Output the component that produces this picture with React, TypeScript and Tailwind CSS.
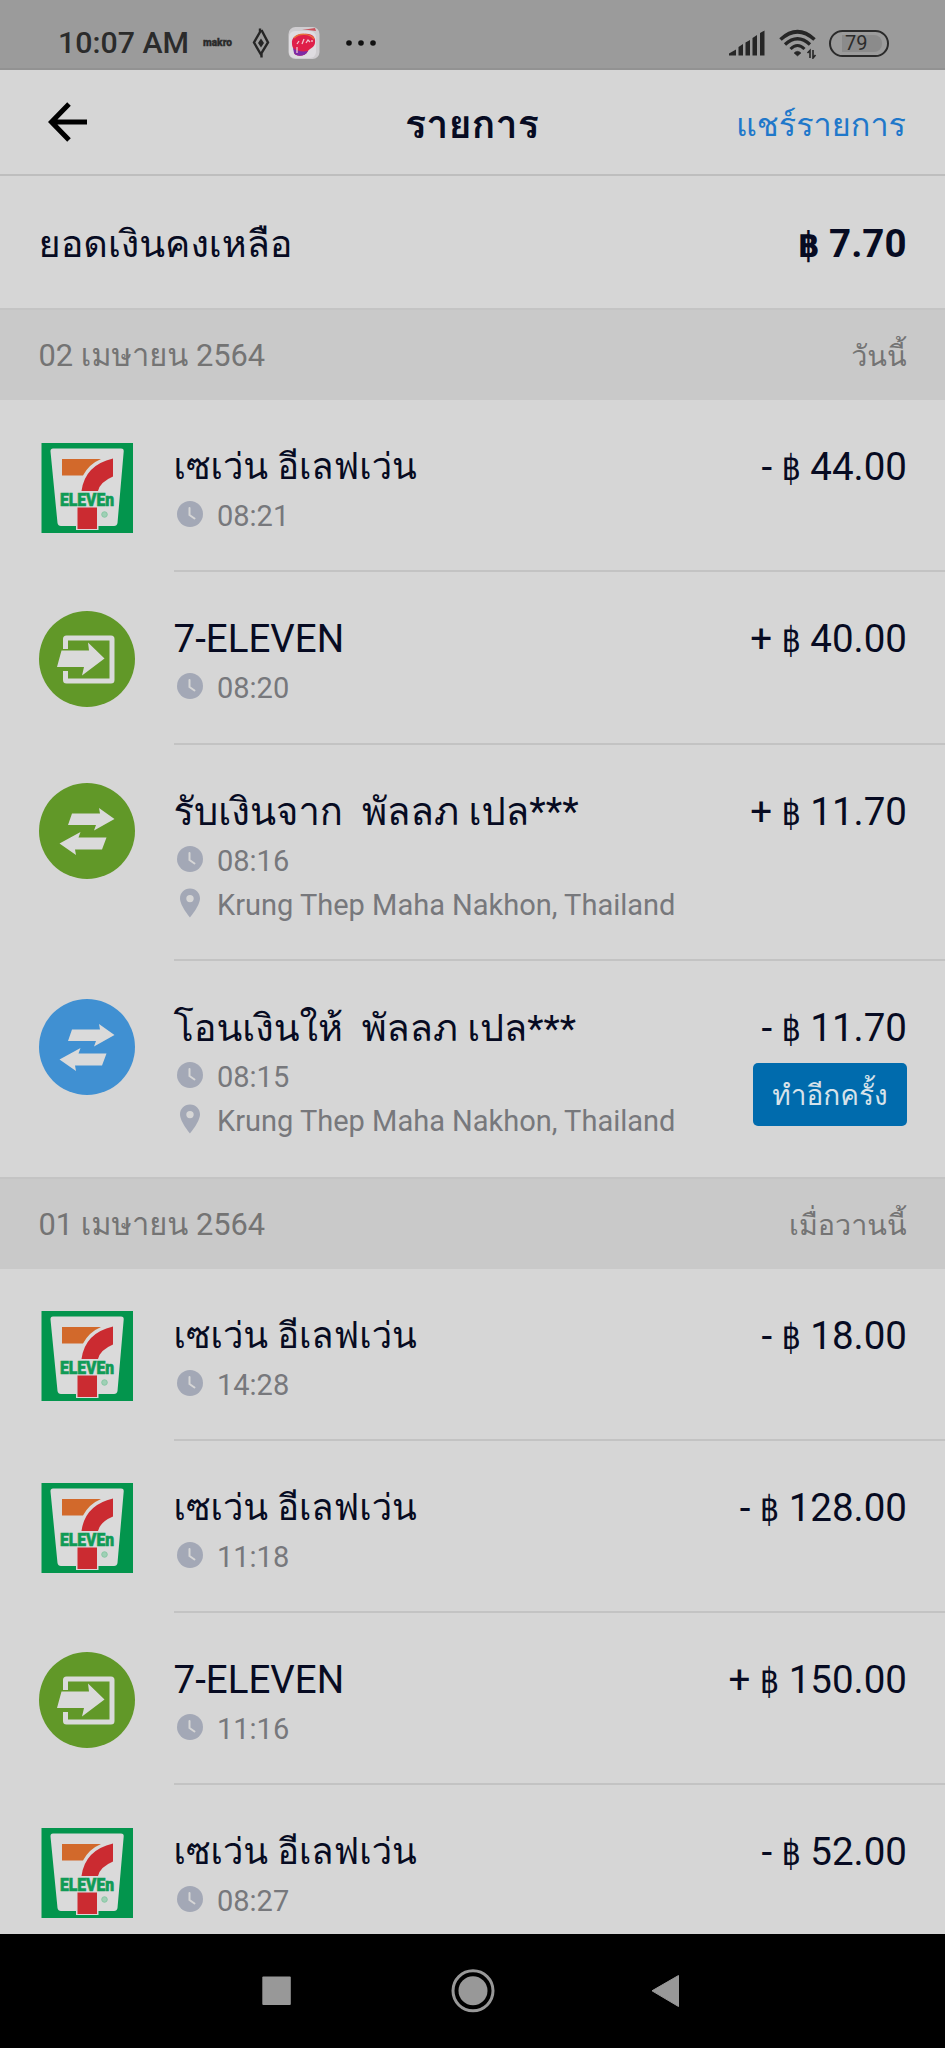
import type { ReactNode } from "react";

type IconKind = "seven" | "topup" | "received" | "sent";

type Transaction = {
  icon: IconKind;
  title: string;
  time: string;
  sign: string;
  amount: string;
  place?: string;
  again?: boolean;
};

const today: Transaction[] = [
  { icon: "seven", title: "เซเว่น อีเลฟเว่น", time: "08:21", sign: "-", amount: "44.00" },
  { icon: "topup", title: "7-ELEVEN", time: "08:20", sign: "+", amount: "40.00" },
  {
    icon: "received",
    title: "รับเงินจาก  พัลลภ เปล***",
    time: "08:16",
    sign: "+",
    amount: "11.70",
    place: "Krung Thep Maha Nakhon, Thailand",
  },
  {
    icon: "sent",
    title: "โอนเงินให้  พัลลภ เปล***",
    time: "08:15",
    sign: "-",
    amount: "11.70",
    place: "Krung Thep Maha Nakhon, Thailand",
    again: true,
  },
];

const yesterday: Transaction[] = [
  { icon: "seven", title: "เซเว่น อีเลฟเว่น", time: "14:28", sign: "-", amount: "18.00" },
  { icon: "seven", title: "เซเว่น อีเลฟเว่น", time: "11:18", sign: "-", amount: "128.00" },
  { icon: "topup", title: "7-ELEVEN", time: "11:16", sign: "+", amount: "150.00" },
  { icon: "seven", title: "เซเว่น อีเลฟเว่น", time: "08:27", sign: "-", amount: "52.00" },
];

const titleSize: Record<IconKind, string> = {
  seven: "text-[36.3px]",
  topup: "text-[38.5px]",
  received: "text-[38.2px]",
  sent: "text-[37.8px]",
};

const SevenLogo = () => (
  <svg viewBox="0 0 96 96" className="w-24 h-24">
    <rect x="2.5" y="4" width="91.5" height="90" fill="#03954d" />
    <path d="M14 9.5H82Q85 9.5 84.7 12.5L78.5 84Q78 87 75 87H22Q19 87 18.5 84L11.5 12.5Q11.3 9.5 14 9.5Z" fill="#dadada" />
    <path d="M23 20H62Q50 25 44 36.5H23Z" fill="#d2692b" />
    <path d="M74 19.5V37.5Q61 43 59 52H42.5Q46 26 74 19.5Z" fill="#cb2b31" />
    <rect x="37" y="67" width="22.5" height="24" fill="#dadada" />
    <rect x="38.5" y="68.5" width="19.5" height="21.5" fill="#cb2b31" />
    <text x="21" y="66.5" textLength="54" lengthAdjust="spacingAndGlyphs" fontFamily="Roboto" fontWeight="900" fontSize="18" fill="#109b56" stroke="#109b56" strokeWidth="0.6">
      ELEVEn
    </text>
    <circle cx="65.5" cy="75.5" r="2.8" fill="#9fd0b5" stroke="#7dc39d" strokeWidth="0.8" />
  </svg>
);

const Circle = ({ color, children }: { color: string; children: ReactNode }) => (
  <svg viewBox="0 0 96 96" className="w-24 h-24">
    <circle cx="48" cy="48" r="48" fill={color} />
    {children}
  </svg>
);

const TopUpArrow = () => (
  <>
    <path d="M26.5 38V28Q26.5 27 27.5 27H72Q73 27 73 28V69Q73 70 72 70H27.5Q26.5 70 26.5 69V60" fill="none" stroke="#dadada" strokeWidth="5" />
    <path d="M22.5 39.5H50L49 31.5L65.5 47.5L43 64.5L45 56H18Z" fill="#dadada" />
  </>
);

const TransferArrows = () => (
  <path
    d="M33 30.5H61L60 25L75.5 36L55 47.5L57 42H29ZM67.5 54.5L63 66.5H36L37 72L20.5 60.5L41.5 49L39.5 54.5Z"
    fill="#dadada"
  />
);

const TxIcon = ({ kind }: { kind: IconKind }) => {
  if (kind === "seven") return <SevenLogo />;
  if (kind === "topup") return <Circle color="#619828"><TopUpArrow /></Circle>;
  return (
    <Circle color={kind === "sent" ? "#4090d2" : "#619828"}>
      <TransferArrows />
    </Circle>
  );
};

const ClockIcon = () => (
  <svg viewBox="0 0 26 26" className="w-[26px] h-[26px]">
    <circle cx="13" cy="13" r="13" fill="#a3a8b6" />
    <path d="M12.5 7V14L17.5 17.5" fill="none" stroke="#d6d6d6" strokeWidth="2" strokeLinecap="round" />
  </svg>
);

const PinIcon = () => (
  <svg viewBox="0 0 26 30" className="w-[26px] h-[30px]">
    <path
      d="M13 0.5C7 0.5 3 5 3 10.5C3 17.5 13 29.5 13 29.5S23 17.5 23 10.5C23 5 19 0.5 13 0.5ZM13 14.3A3.7 3.7 0 1 1 13 6.9A3.7 3.7 0 1 1 13 14.3Z"
      fill="#a3a8b6"
    />
  </svg>
);

// tall, narrow baht sign that keeps the baseline of the digits
const Baht = () => (
  <span className="inline-block font-['DejaVu_Sans'] text-[30px] leading-none origin-[50%_85%] scale-y-[1.18]">฿</span>
);

const StatusBar = () => (
  <div className="h-[70px] shrink-0 bg-[#9b9b9b] border-b-2 border-[#929292] pl-[58px] pr-14 flex justify-between">
    <div className="flex items-center h-[86px]">
      <span className="w-[131px] text-[30.3px] font-medium text-[#2b2b2b] whitespace-nowrap">10:07 AM</span>
      <svg viewBox="0 0 30 12" className="ml-3.5 w-[30px] h-3 overflow-visible">
        <text x="0" y="9" textLength="29" lengthAdjust="spacingAndGlyphs" fontFamily="Roboto" fontWeight="900" fontSize="11" fill="#2b2b2b" stroke="#2b2b2b" strokeWidth="0.4">
          makro
        </text>
      </svg>
      <svg viewBox="0 0 18 30" className="ml-[19px] w-[18px] h-[30px]" fill="none" stroke="#262626" strokeWidth="2.4">
        <path d="M8 0.5V4L2 14.5L9.5 27.5M9.5 2L16 14.5L9.5 25V29.5" />
        <path d="M9 10.5L12 15L9 19.5L6 15Z" fill="#262626" strokeWidth="0" />
      </svg>
      <svg viewBox="0 0 32 34" className="ml-[18px] w-8 h-[34px]">
        <rect x="0.5" y="1" width="31" height="32" rx="7" fill="#cfcdd0" />
        <rect x="1" y="5" width="27" height="27" rx="6" fill="#dedce0" />
        <path d="M14 4L27 2L28 5L20 4Z" fill="#c9525c" />
        <path d="M4 18C3 11 9 8 16 8C24 7 28 11 27 17C26 22 22 22 20 25C17 31 8 31 6 27C7 23 4 22 4 18Z" fill="#df1f49" />
        <path d="M5 22C9 25 14 26 20 25C17 31 8 31 6 27Z" fill="#7c2ba6" />
        <path d="M6 12C11 7 22 7 26 13" fill="none" stroke="#e8713b" strokeWidth="1.5" />
        <path d="M9 27V21M9 18L11 15M14 18L16 13M18 17L20 14L22 16M24 16V14" fill="none" stroke="#f1c4cf" strokeWidth="1.3" />
      </svg>
      <svg viewBox="0 0 32 8" className="ml-[25px] w-8 h-2" fill="#111">
        <circle cx="4" cy="4" r="2.8" />
        <circle cx="16" cy="4" r="2.8" />
        <circle cx="28" cy="4" r="2.8" />
      </svg>
    </div>
    <div className="flex items-center h-[86px]">
      <svg viewBox="0 0 36 26" className="w-9 h-[26px]" fill="#262626">
        <path d="M0 25.5V23.5L7 19.5V25.5ZM9.5 25.5V17L14 14V25.5ZM16.5 25.5V12.5L21 10V25.5ZM23.5 25.5V8L28 5V25.5ZM31 25.5V3L35.5 0.5V25.5Z" />
      </svg>
      <svg viewBox="0 0 38 30" className="ml-3.5 w-[38px] h-[30px] mt-0.5" fill="none" stroke="#262626" strokeWidth="3">
        <path d="M1.5 10.5Q18.5 -5 35.5 10.5" strokeWidth="3.6" />
        <path d="M6 15.5Q18.5 4 31 15.5" strokeWidth="3.3" />
        <path d="M11.5 20Q18.5 13 25.5 20" />
        <path d="M18.5 27L15 24Q18.5 20.5 22 24Z" fill="#262626" strokeWidth="0.5" />
        <path d="M31 29V21.5L28.5 24M34 21V29L36.5 26" strokeWidth="1.6" />
      </svg>
      <div className="ml-3 w-[60px] h-[27px] rounded-full border-2 border-[#2b2b2b] pl-[11px] pr-1 flex items-center">
        <div className="w-10 h-[17px] rounded-r-lg bg-[#8b8b8b] pl-[3px] flex items-center text-[20px] leading-none text-[#2b2b2b]">79</div>
      </div>
    </div>
  </div>
);

const SectionHeader = ({ date, label }: { date: string; label: string }) => (
  <div className="h-[92px] shrink-0 bg-[#c9c9c9] border-t-2 border-[#c4c4c4] px-[38.5px] pt-0.5 flex items-center justify-between text-[30.8px] leading-[44px] text-[#747474]">
    <span>{date}</span>
    <span className="text-[28.7px]">{label}</span>
  </div>
);

const Row = ({ tx, last }: { tx: Transaction; last: boolean }) => (
  <div className={`${tx.place ? "h-[216px]" : "h-[172.3px]"} shrink-0 flex pl-[38.5px]`}>
    <div className="pt-[38.5px] shrink-0">
      <TxIcon kind={tx.icon} />
    </div>
    <div className={`ml-[39px] flex-1 flex justify-between pt-[42px] pr-[38px] ${last ? "" : "border-b-2 border-[#c3c3c3]"}`}>
      <div>
        <div className={`${titleSize[tx.icon]} h-[50px] leading-[50px] whitespace-pre text-[#070b22]`}>{tx.title}</div>
        <div className="mt-0.5 h-11 flex gap-[14px] text-[29px] leading-[44px] text-[#77787c] pl-[3.5px]">
          <div className="pt-[7px]"><ClockIcon /></div>
          <span>{tx.time}</span>
        </div>
        {tx.place && (
          <div className="h-11 flex gap-[14px] text-[29px] leading-[44px] text-[#77787c] pl-[3.5px]">
            <div className="pt-[5px]"><PinIcon /></div>
            <span className="whitespace-nowrap">{tx.place}</span>
          </div>
        )}
      </div>
      <div className="flex flex-col items-end">
        <div className="text-[38.5px] h-[50px] leading-[50px] whitespace-nowrap text-[#070b22]">
          {tx.sign} <Baht /> {tx.amount}
        </div>
        {tx.again && (
          <button className="mt-[10px] pt-1 w-[154px] h-[63px] rounded-[5px] bg-[#006bad] text-[28px] text-[#d6e2ea]">
            ทำอีกครั้ง
          </button>
        )}
      </div>
    </div>
  </div>
);

const NavBar = () => (
  <div className="h-[114px] shrink-0 bg-black">
    <svg viewBox="0 0 945 114" className="w-full h-full" fill="#989898">
      <rect x="262.3" y="42.5" width="28.5" height="28.5" rx="1" />
      <circle cx="473" cy="56.8" r="14.5" />
      <circle cx="473" cy="56.8" r="20" fill="none" stroke="#989898" strokeWidth="3" />
      <path d="M652 56.8L678.5 41.5V72.5Z" stroke="#989898" strokeWidth="1" strokeLinejoin="round" />
    </svg>
  </div>
);

export default function App() {
  return (
    <div className="w-[945px] h-[2048px] overflow-hidden flex flex-col bg-[#d6d6d6] font-[Roboto,Loma,'Noto_Sans_Thai',sans-serif]">
      <StatusBar />
      <header className="h-[106px] shrink-0 border-b-2 border-[#bebebe] grid grid-cols-3 items-center pl-12 pr-[39px]">
        <svg viewBox="0 0 40 40" className="w-10 h-10" fill="none" stroke="#000" strokeWidth="5">
          <path d="M21 2L3.5 20L21 38M3 20H39" />
        </svg>
        <h1 className="pr-2.5 pt-1.5 text-center text-[39.5px] font-bold text-[#070b22]">รายการ</h1>
        <a className="pt-1.5 text-right text-[32.4px] text-[#1f78ca] whitespace-nowrap">แชร์รายการ</a>
      </header>
      <div className="h-[132px] shrink-0 px-[38.5px] pt-1 flex items-center justify-between text-[38.5px] leading-[50px] text-[#070b22]">
        <span className="text-[37.8px]">ยอดเงินคงเหลือ</span>
        <span className="h-[50px] font-bold">
          <Baht /> 7.70
        </span>
      </div>
      <main className="h-[1626px] shrink-0 overflow-hidden flex flex-col">
        <SectionHeader date="02 เมษายน 2564" label="วันนี้" />
        {today.map((tx, i) => (
          <Row key={i} tx={tx} last={i === today.length - 1} />
        ))}
        <SectionHeader date="01 เมษายน 2564" label="เมื่อวานนี้" />
        {yesterday.map((tx, i) => (
          <Row key={i} tx={tx} last={i === yesterday.length - 1} />
        ))}
      </main>
      <NavBar />
    </div>
  );
}
